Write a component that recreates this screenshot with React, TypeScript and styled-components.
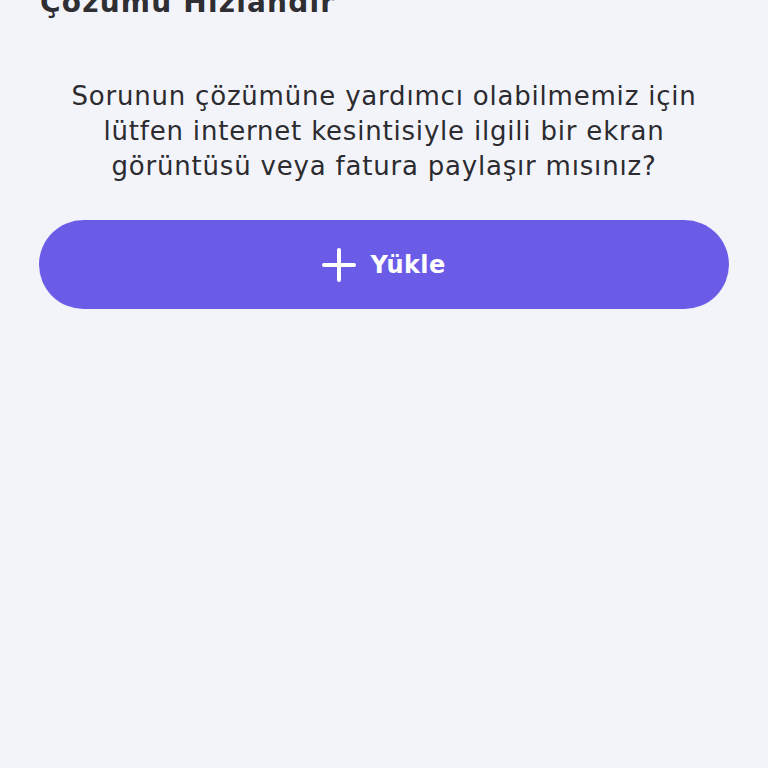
import React from "react";
import styled, { createGlobalStyle } from "styled-components";

const Global = createGlobalStyle`
  html, body { margin: 0; padding: 0; background: #f3f4f9; }
  body { font-family: "DejaVu Sans", "Noto Sans", sans-serif; overflow: hidden; }
`;

const Page = styled.div`
  width: 768px;
  height: 768px;
  box-sizing: border-box;
  padding: 0 39px;
  display: flex;
  flex-direction: column;
  overflow: hidden;
`;

const Title = styled.h1`
  margin: -15px 0 0 0;
  padding-left: 1px;
  font-size: 28px;
  line-height: 36px;
  font-weight: 700;
  letter-spacing: 1.2px;
  color: #2e2e33;
`;

const Message = styled.p`
  margin: 58px 0 0 0;
  text-align: center;
  font-size: 26px;
  line-height: 35px;
  font-weight: 400;
  letter-spacing: 0.8px;
  color: #2b2b30;
`;

const UploadButton = styled.button`
  margin-top: 36px;
  height: 89px;
  width: 100%;
  border: none;
  border-radius: 45px;
  background: #6b5ce8;
  color: #ffffff;
  display: flex;
  align-items: center;
  justify-content: center;
  gap: 14px;
  font-family: inherit;
  font-size: 24px;
  font-weight: 700;
  letter-spacing: 0.4px;
  cursor: pointer;
`;

const PlusIcon = () => (
  <svg width="34" height="34" viewBox="0 0 34 34" fill="none">
    <path d="M17 2v30M2 17h30" stroke="#fff" strokeWidth="4" strokeLinecap="round" />
  </svg>
);

export default function App() {
  return (
    <Page>
      <Global />
      <Title>Çözümü Hızlandır</Title>
      <Message>
        Sorunun çözümüne yardımcı olabilmemiz için
        <br />
        lütfen internet kesintisiyle ilgili bir ekran
        <br />
        görüntüsü veya fatura paylaşır mısınız?
      </Message>
      <UploadButton>
        <PlusIcon />
        <span>Yükle</span>
      </UploadButton>
    </Page>
  );
}
